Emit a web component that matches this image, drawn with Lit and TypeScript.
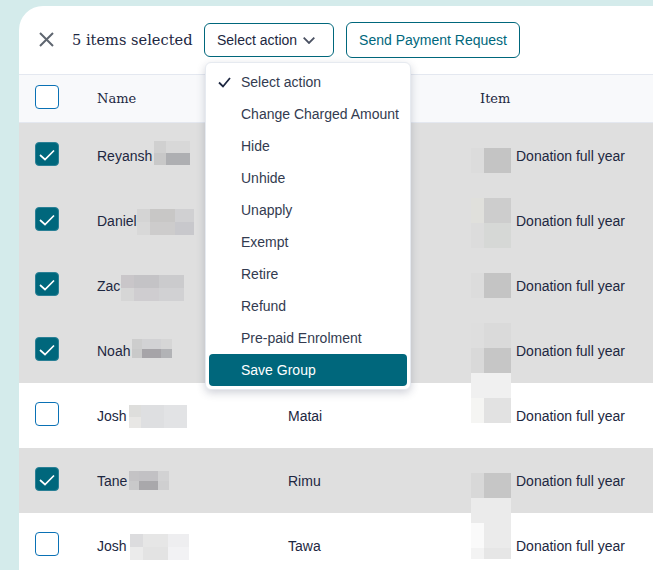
import { LitElement, html, css, svg } from "lit";
import { customElement } from "lit/decorators.js";

type Blur = { x: number; y: number; cols: number[]; rows: number[]; colors: string[] };
type Row = { name: string; checked: boolean; other: string; top: number; nameBlur: Blur; itemBlur: Blur };

const IC = [13, 27];
const rows: Row[] = [
  { name: "Reyansh", checked: true, other: "", top: 123,
    nameBlur: { x: 154, y: 141, cols: [12, 24], rows: [12, 12], colors: ["#d0d0d0", "#d8d8d8", "#c8c8c8", "#aeafb2"] },
    itemBlur: { x: 471, y: 148, cols: IC, rows: [25], colors: ["#dcdcdc", "#c4c4c4"] } },
  { name: "Daniel", checked: true, other: "", top: 188,
    nameBlur: { x: 137, y: 209, cols: [13, 25, 19], rows: [13, 13], colors: ["#d4d4d4", "#c8c7c6", "#d0d0d2", "#d8d8d8", "#cdcccc", "#c8c8cc"] },
    itemBlur: { x: 471, y: 198, cols: IC, rows: [25, 25], colors: ["#e0e0dc", "#cdcdcd", "#dcdcdc", "#d6d8d6"] } },
  { name: "Zac", checked: true, other: "", top: 253,
    nameBlur: { x: 121, y: 275, cols: [13, 25, 25], rows: [13, 13], colors: ["#c9c6c9", "#c4c3c6", "#cbcbcd", "#d6d6d6", "#cfcdd0", "#d1d1d3"] },
    itemBlur: { x: 471, y: 273, cols: IC, rows: [25], colors: ["#dcdcdc", "#c4c4c4"] } },
  { name: "Noah", checked: true, other: "", top: 318,
    nameBlur: { x: 132, y: 339, cols: [10, 19, 11], rows: [10, 9], colors: ["#cdcdcd", "#d2d2d4", "#d6d6d6", "#c9c9c9", "#a6a4a8", "#b2b3b6"] },
    itemBlur: { x: 471, y: 323, cols: IC, rows: [25, 25], colors: ["#dedede", "#dadada", "#d9d9d9", "#c6c6c6"] } },
  { name: "Josh", checked: false, other: "Matai", top: 383,
    nameBlur: { x: 129, y: 405, cols: [12, 23, 23], rows: [12, 11], colors: ["#dededc", "#dedfe1", "#e2e3e5", "#e8e7e5", "#dedfe1", "#e2e3e5"] },
    itemBlur: { x: 471, y: 373, cols: IC, rows: [25, 25], colors: ["#f0f0f0", "#f0f0f0", "#f5f5f3", "#e2e2e2"] } },
  { name: "Tane", checked: true, other: "Rimu", top: 448,
    nameBlur: { x: 129, y: 471, cols: [10, 19, 11], rows: [10, 9], colors: ["#c4c3c5", "#c2c1c4", "#d2d2d3", "#c9c9ca", "#a9a8ab", "#cfcfd0"] },
    itemBlur: { x: 471, y: 473, cols: IC, rows: [25], colors: ["#d8d8d8", "#c6c6c6"] } },
  { name: "Josh", checked: false, other: "Tawa", top: 513,
    nameBlur: { x: 130, y: 534, cols: [13, 25, 21], rows: [13, 13], colors: ["#dcdcde", "#e6e6e6", "#eeeef0", "#ebebeb", "#e3e3e3", "#f2f2f4"] },
    itemBlur: { x: 471, y: 498, cols: IC, rows: [25, 25, 11], colors: ["#ebebeb", "#ebebeb", "#fafafa", "#ebebeb", "#f3f3f3", "#e6e6e6"] } },
];

const actions = ["Select action", "Change Charged Amount", "Hide", "Unhide", "Unapply", "Exempt", "Retire", "Refund", "Pre-paid Enrolment", "Save Group"];

const tick = svg`<polyline points="5,13 10,17.5 19,8.5" fill="none" stroke="#fff" stroke-width="1.7"/>`;

@customElement("app-root")
export class AppRoot extends LitElement {
  static styles = css`
    :host { display: block; height: 570px; overflow: hidden; background: #d4ebeb; padding: 6px 0 0 19px; box-sizing: border-box;
      font-family: "Liberation Sans", Arial, sans-serif; font-size: 14px; color: #1d2741; }
    .card { background: #fff; border-radius: 24px 0 0 0; position: relative; }
    .toolbar { height: 68px; box-sizing: border-box; display: flex; align-items: center; padding: 0 0 0 20px; }
    .close { width: 15px; height: 15px; display: block; margin-top: -1px; }
    .count { margin-left: 18px; width: 132px; font-family: "DejaVu Serif", serif; font-size: 14.6px; color: #1d2741; margin-top: -1px; white-space: nowrap; }
    .btn { box-sizing: border-box; display: flex; align-items: center; border: 1px solid #00677c; border-radius: 6px; background: #fff; }
    .select { width: 130px; height: 34px; padding-left: 12px; }
    .select svg { margin-left: 6px; }
    .send { width: 174px; height: 36px; margin-left: 12px; justify-content: center; color: #00677c; }
    .grid { display: grid; grid-template-columns: 78px 191px 192px 1fr; align-items: center; }
    .head { height: 49px; background: #f8f9fb; border-top: 1px solid #e4e8f0; border-bottom: 1px solid #e4e8f0; box-sizing: border-box; font-family: "DejaVu Serif", serif; font-size: 13px; }
    .head .label { margin-top: -1px; }
    .row { height: 65px; }
    .row.sel { background: #dfdfdf; }
    .box { width: 24px; height: 24px; box-sizing: border-box; border: 1px solid #0a71b5; border-radius: 4px; background: #fff; margin: 0 0 3px 16px; display: block; }
    .box.on { background: #00677c; border-color: #2a8096; }
    .name { display: block; }
    .item { padding-left: 36px; white-space: nowrap; }
    .blur { position: absolute; display: grid; }
    .menu { position: absolute; left: 186px; top: 56px; width: 206px; box-sizing: border-box; padding: 3px; background: #fff; border: 1px solid #e6eaf0; border-radius: 6px;
      box-shadow: 0 3px 8px rgba(40, 50, 80, 0.22); z-index: 5; color: #333b50; }
    .opt { height: 32px; display: flex; align-items: center; padding-left: 32px; position: relative; border-radius: 4px; white-space: nowrap; }
    .opt.primary { background: #00677c; color: #fff; }
    .opt svg { position: absolute; left: 9px; top: 11px; }
  `;

  blur(b: Blur) {
    return html`<div class="blur" style="left:${b.x - 19}px;top:${b.y - 6}px;grid-template-columns:${b.cols.map((c) => c + "px").join(" ")};grid-template-rows:${b.rows.map((c) => c + "px").join(" ")}">
      ${b.colors.map((c) => html`<span style="background:${c}"></span>`)}
    </div>`;
  }

  render() {
    return html`<div class="card">
      <div class="toolbar">
        <svg class="close" viewBox="0 0 15 15"><path d="M1 1 L14 14 M14 1 L1 14" stroke="#5f6670" stroke-width="2" fill="none"/></svg>
        <div class="count">5 items selected</div>
        <div class="btn select">Select action
          <svg width="12" height="7" viewBox="0 0 12 7"><polyline points="0.7,0.7 6,6 11.3,0.7" fill="none" stroke="#4a5162" stroke-width="1.8"/></svg>
        </div>
        <div class="btn send">Send Payment Request</div>
      </div>
      <div class="grid head">
        <span class="box"></span><span class="label">Name</span><span></span><span class="label">Item</span>
      </div>
      ${rows.map((r) => html`<div class="grid row ${r.checked ? "sel" : ""}">
        <span class="box ${r.checked ? "on" : ""}">${r.checked ? html`<svg width="22" height="22" viewBox="1 1 22 22">${tick}</svg>` : ""}</span>
        <span class="name">${r.name}</span>
        <span>${r.other}</span>
        <span class="item">Donation full year</span>
      </div>`)}
      ${rows.map((r) => html`${this.blur(r.nameBlur)}${this.blur(r.itemBlur)}`)}
      <div class="menu">
        ${actions.map((a, i) => html`<div class="opt ${a === "Save Group" ? "primary" : ""}">
          ${i === 0 ? html`<svg width="13" height="11" viewBox="0 0 13 11"><polyline points="1,5.5 5,9.5 12,1" fill="none" stroke="#1d2741" stroke-width="1.8"/></svg>` : ""}${a}
        </div>`)}
      </div>
    </div>`;
  }
}
